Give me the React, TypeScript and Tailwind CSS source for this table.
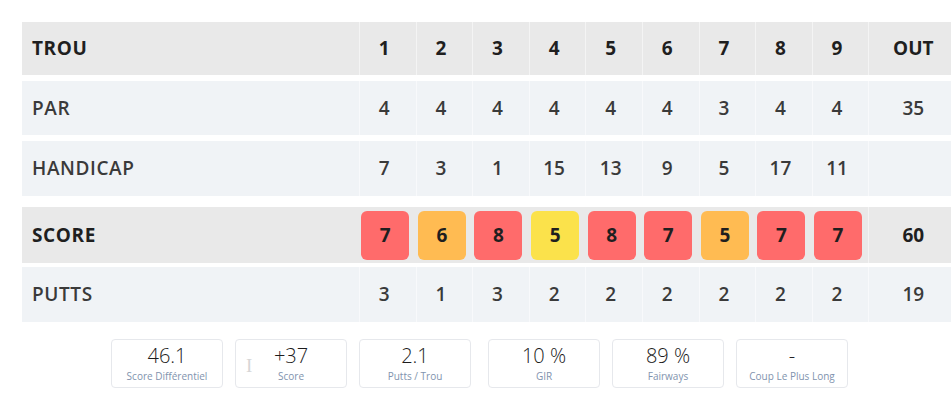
const holes = [1, 2, 3, 4, 5, 6, 7, 8, 9];
const par = [4, 4, 4, 4, 4, 4, 3, 4, 4];
const handicap = [7, 3, 1, 15, 13, 9, 5, 17, 11];
const score = [7, 6, 8, 5, 8, 7, 5, 7, 7];
const putts = [3, 1, 3, 2, 2, 2, 2, 2, 2];

const stats = [
  { value: '46.1', label: 'Score Différentiel' },
  { value: '+37', label: 'Score' },
  { value: '2.1', label: 'Putts / Trou' },
  { value: '10 %', label: 'GIR' },
  { value: '89 %', label: 'Fairways' },
  { value: '-', label: 'Coup Le Plus Long' },
];

const grid = 'grid grid-cols-[337px_repeat(9,56.6px)_89px]';

function scoreColor(s: number, p: number) {
  const diff = s - p;
  if (diff >= 3) return 'bg-[#ff6b6b]';
  if (diff === 2) return 'bg-[#ffbb52]';
  if (diff === 1) return 'bg-[#fbe24b]';
  return 'bg-[#e5e7eb]';
}

function Row({
  label,
  values,
  total,
  bg,
  bold,
  h,
}: {
  label: string;
  values: (number | string)[];
  total: string;
  bg: string;
  bold?: boolean;
  h: string;
}) {
  const weight = bold ? 'font-bold text-[#1f1f1f]' : 'font-semibold text-[#3a3a3a]';
  return (
    <div className={`${grid} ${bg} ${h} items-stretch`}>
      <div className={`flex items-center pl-[10px] text-[19px] tracking-[0.6px] ${weight}`}>{label}</div>
      {values.map((v, i) => (
        <div key={i} className={`flex items-center justify-center pr-[7px] border-l border-white/50 text-[19px] ${weight}`}>
          {v}
        </div>
      ))}
      <div className={`flex items-center justify-center border-l border-white/50 text-[19px] ${weight}`}>{total}</div>
    </div>
  );
}

export default function App() {
  return (
    <div className="w-[951px] h-[410px] overflow-hidden bg-white" style={{ fontFamily: '"Open Sans", "Liberation Sans", sans-serif' }}>
      <div className="pt-[22px] pl-[22px] w-[960px]">
        <Row label="TROU" values={holes} total="OUT" bg="bg-[#e9e9e9]" bold h="h-[53px]" />
        <div className="h-[6px]" />
        <Row label="PAR" values={par} total="35" bg="bg-[#f0f3f6]" h="h-[54px]" />
        <div className="h-[6px]" />
        <Row label="HANDICAP" values={handicap} total="" bg="bg-[#f0f3f6]" h="h-[55px]" />
        <div className="h-[11px]" />
        <div className={`${grid} bg-[#e9e9e9] h-[56px]`}>
          <div className="flex items-center pl-[10px] text-[19px] tracking-[0.6px] font-bold text-[#1f1f1f]">SCORE</div>
          {score.map((s, i) => (
            <div key={i} className="flex items-center justify-center pr-[4px]">
              <div
                className={`w-[48px] h-[49px] rounded-[6px] flex items-center justify-center text-[19px] font-bold text-[#1f1f1f] ${scoreColor(s, par[i])}`}
              >
                {s}
              </div>
            </div>
          ))}
          <div className="flex items-center justify-center border-l border-white/50 text-[19px] font-bold text-[#1f1f1f]">60</div>
        </div>
        <div className="h-[4px]" />
        <Row label="PUTTS" values={putts} total="19" bg="bg-[#f0f3f6]" h="h-[55px]" />
      </div>

      <div className="flex pl-[111px] pt-[17px]">
        {stats.map((s, i) => (
          <div
            key={s.label}
            className={`relative w-[112px] h-[49px] rounded-[4px] border border-[#e6e8ec] flex flex-col items-center justify-center ${
              i === 0 ? '' : i === 3 ? 'ml-[17px]' : 'ml-[12px]'
            }`}
          >
            <div className="text-[20px] font-light leading-[24px] text-[#1c1c1c]">{s.value}</div>
            <div className="text-[10px] leading-[13px] text-[#8193ae] mt-[2px]">{s.label}</div>
            {i === 1 && (
              <span
                className="absolute left-[10px] top-[16px] text-[19px] leading-none text-[#d6d6d6]"
                style={{ fontFamily: '"Liberation Serif", serif' }}
              >
                I
              </span>
            )}
          </div>
        ))}
      </div>
    </div>
  );
}
